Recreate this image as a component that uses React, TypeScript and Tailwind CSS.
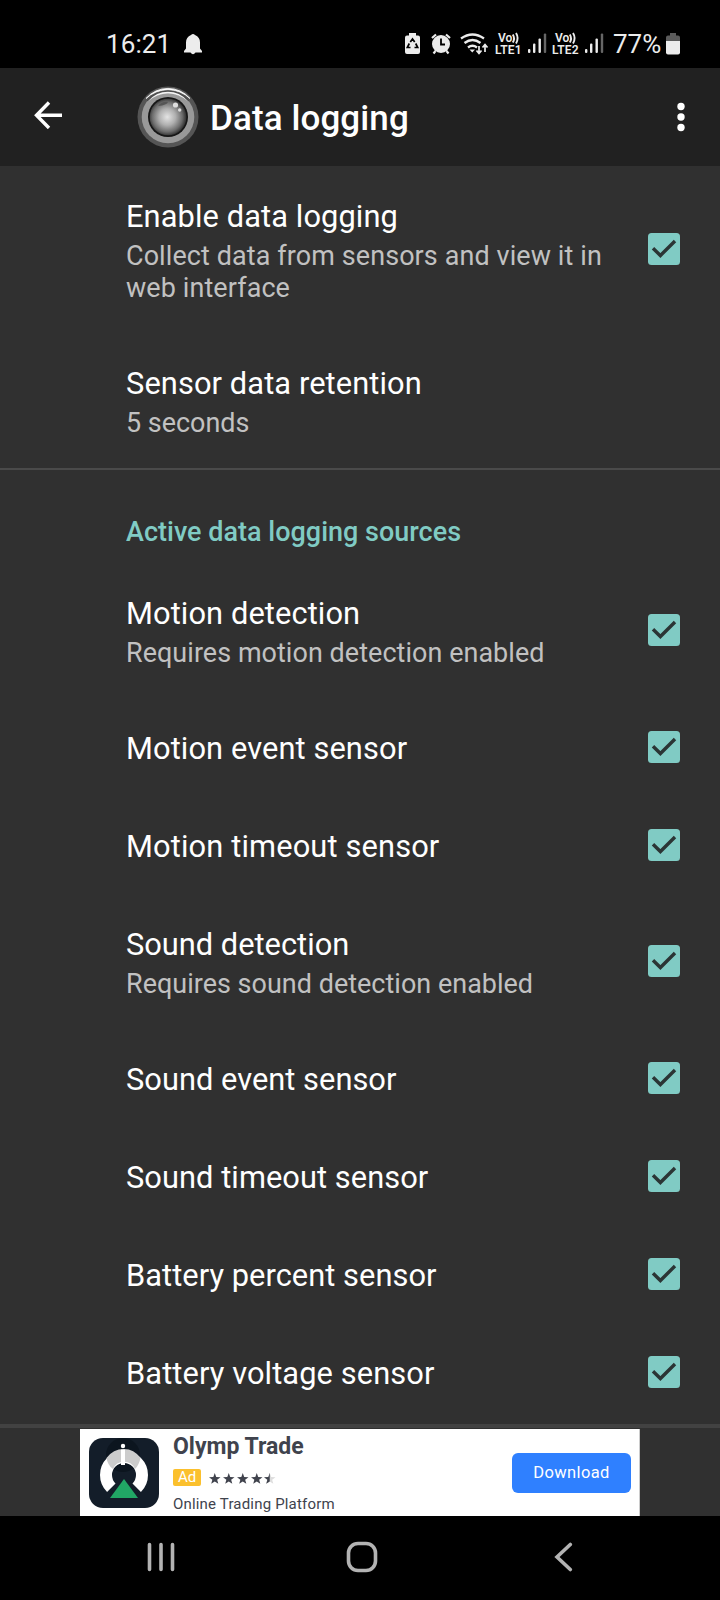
import React from "react";

function Check() {
  return (
    <svg className="mr-10 h-8 w-8 shrink-0" viewBox="0 0 32 32">
      <rect width="32" height="32" rx="3.5" fill="#80cbc4" />
      <path d="M5 15.2 L12.4 22.5 L27 8" fill="none" stroke="#2b3535" strokeWidth="3.4" />
    </svg>
  );
}

type RowProps = { title: string; sub?: string[]; check?: boolean; h: string; tw?: string; sw?: string };

function Row({ title, sub, check = true, h, tw = "tracking-[0.1px]", sw = "" }: RowProps) {
  return (
    <div className={`flex shrink-0 items-center pl-[126px] ${h}`}>
      <div className={`flex-1 whitespace-nowrap ${sub ? "pt-[2px]" : "pt-[3px]"}`}>
        <div className={`text-[30.8px] leading-[41px] text-white ${tw}`}>{title}</div>
        {sub && (
          <div className={`pt-[3px] text-[26.95px] leading-[32px] text-[#c1c1c1] ${sw}`}>
            {sub.map((s) => (
              <div key={s}>{s}</div>
            ))}
          </div>
        )}
      </div>
      {check && <Check />}
    </div>
  );
}

function StatusBar() {
  return (
    <div className="relative h-[68px] shrink-0 bg-black text-[#ececec]">
      <span className="absolute left-[106px] top-[28px] text-[26px] leading-8 tracking-[0.1px]">16:21</span>
      <span className="absolute left-[613px] top-[28px] text-[26px] leading-8">77%</span>
      <svg className="absolute inset-0" width="720" height="68" fill="#ececec">
        <path d="M191 35q2-1.800 4 0q5 2 5 7.500v6l2 2.500v1.500h-18v-1.500l2-2.500v-6q0-5.500 5-7.500zM190.500 52.500h5q-2.500 3.500-5 0z" />
        <path d="M409 33h7v2.500h2q2 0 2 2V52q0 2-2 2h-11q-2 0-2-2V37.500q0-2 2-2h2z" />
        <path d="M410.300 42l2.200-3 2.200 3M415.700 43.500l2 4h-3.200M409.300 43.500l-2 4h3.200" fill="none" stroke="#000" strokeWidth="1.700" />
        <circle cx="441" cy="44" r="9" />
        <path d="M432 38l4-3.500M450 38l-4-3.500M435.500 51l-2 2.500M446.500 51l2 2.500" stroke="#ececec" strokeWidth="2.200" />
        <path d="M441 38.500v6h4" fill="none" stroke="#000" strokeWidth="1.800" />
        <g fill="none" stroke="#ececec" strokeWidth="2.300">
          <path d="M461 38.500q11.500-8 23 0M464.500 43q8-6 16 0M468 47.500q4.500-3.500 9 0" />
          <path d="M479 46v7M476.500 50.500l2.500 3 2.500-3M485 52v-7M482.500 47.500l2.500-3 2.500 3" strokeWidth="1.700" />
        </g>
        <path d="M469.500 49.500h5.500l-2.700 3z" />
        {[0, 57].map((x) => (
          <g key={x} transform={`translate(${x} 0)`}>
            <rect x="528" y="49" width="2.400" height="4" rx="1" />
            <rect x="533" y="43.500" width="2.400" height="9.500" rx="1" />
            <rect x="538.500" y="38.500" width="2.400" height="14.500" rx="1" />
            <rect x="543.800" y="33.500" width="2.400" height="19.500" rx="1" fill="#666" />
            <path d="M512.800 34.500q2.500 4 0 8M516 33q3.200 5 0 10.500" fill="none" stroke="#ececec" strokeWidth="1.900" />
          </g>
        ))}
        <path d="M670 33h6v2.500h2q2 0 2 2V42h-14v-4.500q0-2 2-2h2z" fill="#5b5b5b" />
        <path d="M666 41h14v11.500q0 2-2 2h-10q-2 0-2-2z" />
      </svg>
      <span className="absolute left-[498px] top-[32px] text-[12px] font-semibold leading-3">Vo</span>
      <span className="absolute left-[495px] top-[44px] text-[12px] font-semibold leading-3 tracking-[0.2px]">LTE1</span>
      <span className="absolute left-[555px] top-[32px] text-[12px] font-semibold leading-3">Vo</span>
      <span className="absolute left-[552px] top-[44px] text-[12px] font-semibold leading-3 tracking-[0.2px]">LTE2</span>
    </div>
  );
}

function Lens() {
  return (
    <svg className="ml-[73px] mt-[18px] h-[62px] w-[62px]" viewBox="0 0 62 62">
      <defs>
        <radialGradient id="glass" cx=".48" cy=".5" r=".5">
          <stop offset="0" stopColor="#e4e4e4" />
          <stop offset=".45" stopColor="#b0b0b0" />
          <stop offset=".82" stopColor="#6c6c6c" />
          <stop offset="1" stopColor="#3a3a3a" />
        </radialGradient>
      </defs>
      <circle cx="31" cy="31" r="30.500" fill="#555" />
      <circle cx="31" cy="31" r="26.300" fill="#999" />
      <path d="M9 12.500A29 29 0 0 1 53 12.500A32 32 0 0 0 9 12.500z" fill="#fff" stroke="#fff" strokeWidth=".8" />
      <path d="M10 15A27 27 0 0 1 52 15A31 31 0 0 0 10 15z" fill="#4a4a4a" stroke="#4a4a4a" strokeWidth="1" />
      <path d="M11.500 15A25 25 0 0 1 50.500 15A29 29 0 0 0 11.500 15z" fill="#f4f4f4" />
      <circle cx="31" cy="31" r="20" fill="#161616" />
      <circle cx="31" cy="31" r="18.300" fill="url(#glass)" />
      <path d="M21 20q4-5 10-4q-1 3-10 4z" fill="#555" />
      <circle cx="38.500" cy="19" r="2.600" fill="#ddd" />
      <circle cx="42.700" cy="24" r="1.700" fill="#ddd" />
    </svg>
  );
}

function Toolbar() {
  return (
    <div className="flex h-[98px] shrink-0 items-start bg-[#212121]">
      <svg className="ml-[34px] mt-[33px] h-7 w-[30px]" viewBox="0 0 30 28" fill="none" stroke="#fff" strokeWidth="3.400">
        <path d="M28 14.300H3M15 1.500L2.500 14.300L15 27" />
      </svg>
      <Lens />
      <h1 className="ml-[11px] mt-[30px] flex-1 whitespace-nowrap text-[35px] font-medium leading-[41px] tracking-[0.1px] text-white">Data logging</h1>
      <svg className="mr-[35px] mt-[34px] h-[30px] w-2" viewBox="0 0 8 30" fill="#fff">
        <circle cx="4" cy="4.500" r="3.700" />
        <circle cx="4" cy="15" r="3.700" />
        <circle cx="4" cy="25.500" r="3.700" />
      </svg>
    </div>
  );
}

const STAR = "M6 0L7.500 4.100L12 4.300L8.500 7L9.700 11.200L6 8.800L2.300 11.200L3.500 7L0 4.300L4.500 4.100z";

function Ad() {
  return (
    <div className="mt-px flex h-[87px] w-[560px] shrink-0 self-center border-r border-[#ccc] bg-white text-[#40434d]">
      <svg className="ml-[9px] mt-[9px] h-[70px] w-[70px] shrink-0" viewBox="0 0 70 70">
        <rect width="70" height="70" rx="14" fill="#131d29" />
        <circle cx="34" cy="17" r="17" fill="#0c151f" />
        <path d="M22.300 49.700A18 18 0 1 1 47.700 49.700" fill="none" stroke="#fff" strokeWidth="12" />
        <path d="M17.500 20Q24 11 35 11Q45 11 51.500 20Q50 27 46 31A12 12 0 0 0 24 31Q18.500 27 17.500 20z" fill="#ccc" />
        <circle cx="34" cy="8" r="2.200" fill="#fff" />
        <rect x="32" y="11.500" width="4" height="15.500" fill="#fff" />
        <path d="M35 41L49 60H21z" fill="#21a765" />
      </svg>
      <div className="ml-[14px] flex-1 whitespace-nowrap">
        <div className="mt-[4px] text-[23px] font-bold leading-7">Olymp Trade</div>
        <div className="mt-[8px] flex h-[17px] items-center">
          <div className="w-7 rounded-[2px] bg-[#fbc02d] text-center text-[15px] leading-[17px] text-white">Ad</div>
          <svg className="ml-2 mt-[2px]" width="68" height="12" fill="#40434d">
            <defs>
              <clipPath id="left"><rect width="6" height="12" /></clipPath>
            </defs>
            {[0, 14, 28, 42].map((x) => <path key={x} d={STAR} transform={`translate(${x} 0) scale(.96)`} />)}
            <path d={STAR} transform="translate(55 0) scale(.96)" fill="#ddd" />
            <g transform="translate(55 0) scale(.96)"><path d={STAR} clipPath="url(#left)" /></g>
          </svg>
        </div>
        <div className="mt-[9px] text-[15px] leading-[18px] tracking-[0.18px]">Online Trading Platform</div>
      </div>
      <div className="mr-2 mt-6 h-10 w-[119px] rounded-[6px] bg-[#2f80ff] text-center text-[16.500px] leading-[39px] tracking-[0.4px] text-white">Download</div>
    </div>
  );
}

export default function App() {
  return (
    <div className="flex h-[1600px] w-[720px] flex-col overflow-hidden bg-[#303030] font-['Roboto',sans-serif]">
      <StatusBar />
      <Toolbar />
      <Row h="h-[166px]" title="Enable data logging" sub={["Collect data from sensors and view it in", "web interface"]} sw="tracking-[0.11px]" />
      <Row h="h-[136px]" title="Sensor data retention" sub={["5 seconds"]} check={false} />
      <div className="h-[94px] shrink-0 border-t-2 border-[#4a4a4a] pl-[126px] pt-[44px] text-[26.95px] font-medium leading-[36px] tracking-[0.03px] text-[#80cbc4]">Active data logging sources</div>
      <Row h="h-[136px]" title="Motion detection" sub={["Requires motion detection enabled"]} sw="tracking-[0.06px]" />
      <Row h="h-[98px]" title="Motion event sensor" />
      <Row h="h-[98px]" title="Motion timeout sensor" tw="tracking-[0.14px]" />
      <Row h="mb-px h-[134px]" title="Sound detection" tw="" sub={["Requires sound detection enabled"]} sw="tracking-[0.03px]" />
      <Row h="h-[98px]" title="Sound event sensor" tw="tracking-[0.03px]" />
      <Row h="h-[98px]" title="Sound timeout sensor" tw="tracking-[0.06px]" />
      <Row h="h-[98px]" title="Battery percent sensor" tw="tracking-[0.05px]" />
      <Row h="mb-[3px] h-[98px]" title="Battery voltage sensor" />
      <div className="h-1 shrink-0 bg-[#424242]" />
      <Ad />
      <div className="h-[84px] shrink-0 bg-black">
        <svg width="720" height="84" fill="none" stroke="#b3b3b3" strokeWidth="3.600" strokeLinecap="round">
          <path d="M149.500 28.500v25M161 28.500v25M172.500 28.500v25M570.300 28.500L557 41L570.300 53.500" />
          <rect x="348.500" y="27.500" width="27" height="27" rx="9.500" />
        </svg>
      </div>
    </div>
  );
}
